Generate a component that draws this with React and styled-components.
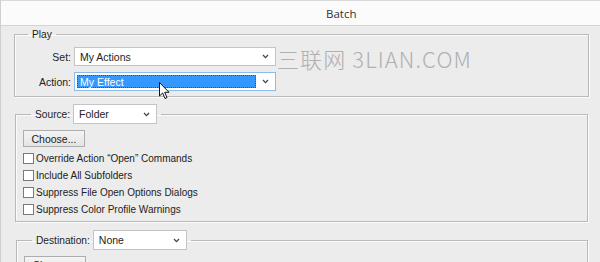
import React from "react";
import styled, { createGlobalStyle } from "styled-components";

const Global = createGlobalStyle`
  html, body { margin: 0; padding: 0; background: #ececec; }
  body { font-family: "Liberation Sans", Arial, sans-serif; font-size: 10px; color: #1e1e1e; }
  #root { width: 600px; height: 262px; overflow: hidden; }
`;

const Window = styled.div`
  position: relative;
  width: 600px;
  height: 262px;
  box-sizing: border-box;
  background: #ececec;
  border-left: 1px solid #cfcfcf;
  overflow: hidden;
`;

const TitleBar = styled.div`
  height: 24px;
  background: #fbfbfb;
  border-top: 1px solid #dadada;
  border-bottom: 1px solid #d4d4d4;
  display: flex;
  align-items: center;
  padding-left: 325px;
  font-family: "Open Sans", "Noto Sans", sans-serif;
  font-size: 11.5px;
  color: #333;
`;

const Content = styled.div`
  padding-top: 2px;
`;

const Group = styled.fieldset`
  margin: ${(p) => p.$mt || 0}px ${(p) => 599 - p.$right}px 0 ${(p) => p.$left - 1}px;
  padding: ${(p) => p.$pt}px 0 ${(p) => p.$pb}px 0;
  border: 1px solid #b9b9b9;
  box-shadow: inset 1px 1px 0 #fbfbfb, 1px 1px 0 #fbfbfb;
  min-width: 0;
`;

const Legend = styled.legend`
  margin-left: ${(p) => p.$ml}px;
  padding: 0 4px;
  display: flex;
  align-items: center;
  gap: 3px;
  line-height: 13px;
  font-size: 10.2px;
  color: #222;
`;

const FormRow = styled.div`
  display: flex;
  align-items: center;
  height: 19px;
  & + & { margin-top: 6px; }
`;

const Label = styled.span`
  width: 56px;
  text-align: right;
  margin-right: 3px;
  font-size: 10.5px;
  color: #222;
`;

const Select = styled.div`
  box-sizing: border-box;
  width: ${(p) => p.$w}px;
  height: ${(p) => p.$h || 19}px;
  background: #fff;
  border: 1px solid ${(p) => (p.$focus ? "#8cbcec" : "#c4c4c4")};
  display: flex;
  align-items: center;
  padding: 0 6px 0 ${(p) => (p.$focus ? 2 : 5)}px;
  font-size: 10.5px;
  color: #222;
`;

const SelectValue = styled.span`
  flex: 1;
  white-space: nowrap;
`;

const Highlight = styled.span`
  flex: 1;
  box-sizing: border-box;
  height: 13px;
  margin-right: 6px;
  background: #3399ff;
  color: #fff;
  border: 1px dotted #5a4a3a;
  display: flex;
  align-items: center;
  padding-left: 2px;
`;

const Chevron = () => (
  <svg width="7" height="5" viewBox="0 0 7 5" style={{ flexShrink: 0 }}>
    <path d="M1 1 L3.5 3.6 L6 1" fill="none" stroke="#444" strokeWidth="1.3" />
  </svg>
);

const Button = styled.button`
  box-sizing: border-box;
  margin-left: 7px;
  width: 62px;
  height: 17px;
  padding: 0;
  border: 1px solid #adadad;
  background: linear-gradient(#f4f4f4, #e4e4e4);
  font-family: inherit;
  font-size: 10.5px;
  color: #222;
  display: block;
`;

const CheckList = styled.div`
  margin-top: 3px;
`;

const CheckRow = styled.label`
  display: flex;
  align-items: center;
  height: 17px;
  padding-left: 7px;
  color: #222;
`;

const Box = styled.span`
  box-sizing: border-box;
  width: 11px;
  height: 11px;
  border: 1px solid #7a7a7a;
  background: #fff;
  margin-right: 2px;
`;

const Watermark = styled.div`
  position: absolute;
  left: 276px;
  top: 42px;
  font-family: "Noto Sans CJK SC", "Open Sans", sans-serif;
  font-weight: 300;
  font-size: 22px;
  letter-spacing: 1.1px;
  color: #b0b0b0;
  white-space: nowrap;
  pointer-events: none;
`;

const Cursor = styled.svg`
  position: absolute;
  left: 158px;
  top: 82px;
`;

const checks = [
  "Override Action \u201COpen\u201D Commands",
  "Include All Subfolders",
  "Suppress File Open Options Dialogs",
  "Suppress Color Profile Warnings",
];

export default function App() {
  return (
    <Window>
      <Global />
      <TitleBar>Batch</TitleBar>
      <Content>
        <Group $left={14} $right={588} $pt={6} $pb={5}>
          <Legend $ml={13}>Play</Legend>
          <FormRow>
            <Label>Set:</Label>
            <Select $w={202}>
              <SelectValue>My Actions</SelectValue>
              <Chevron />
            </Select>
          </FormRow>
          <FormRow>
            <Label>Action:</Label>
            <Select $w={202} $focus>
              <Highlight>My Effect</Highlight>
              <Chevron />
            </Select>
          </FormRow>
        </Group>

        <Group $left={15} $right={587} $mt={7} $pt={6} $pb={3}>
          <Legend $ml={15}>
            Source:
            <Select $w={84} $h={20}>
              <SelectValue>Folder</SelectValue>
              <Chevron />
            </Select>
          </Legend>
          <Button>Choose...</Button>
          <CheckList>
            {checks.map((c) => (
              <CheckRow key={c}>
                <Box />
                {c}
              </CheckRow>
            ))}
          </CheckList>
        </Group>

        <Group $left={16} $right={587} $mt={8} $pt={6} $pb={5}>
          <Legend $ml={15}>
            Destination:
            <Select $w={94} $h={20}>
              <SelectValue>None</SelectValue>
              <Chevron />
            </Select>
          </Legend>
          <Button>Choose...</Button>
        </Group>
      </Content>

      <Watermark>三联网 3LIAN.COM</Watermark>
      <Cursor width="12" height="18" viewBox="0 0 12 18">
        <path d="M0.5 0.5 L0.5 14 L3.6 11 L6 16.5 L8 15.6 L5.7 10.3 L10 10.3 Z" fill="#fff" stroke="#111" strokeWidth="1" strokeLinejoin="round" />
      </Cursor>
    </Window>
  );
}
